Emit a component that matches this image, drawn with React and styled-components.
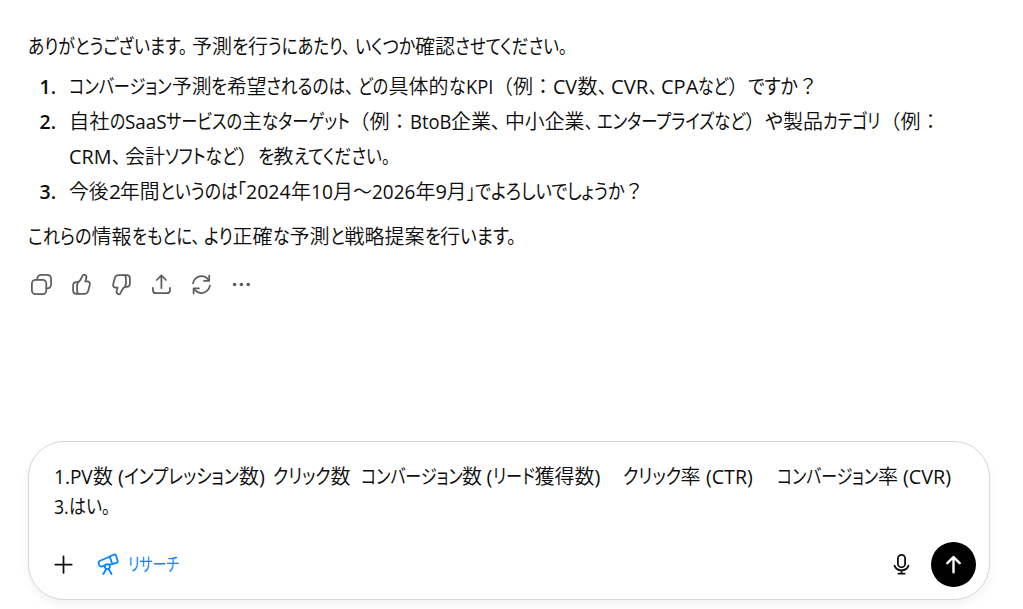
import React, { useLayoutEffect, useRef } from 'react'
import styled, { createGlobalStyle } from 'styled-components'

const GlobalStyle = createGlobalStyle`
  body {
    margin: 0;
    background: #fff;
    color: #0d0d0d;
    overflow: hidden;
    font-family: "Open Sans", "Noto Sans CJK JP", sans-serif;
  }
`

// each piece is [text, advance in px]
const INTRO = [
  ['ありがとうございます。', 164], ['予測', 40], ['を', 16], ['行', 20],
  ['うにあたり、', 86.5], ['いくつか', 60.5], ['確認', 40], ['させてください。', 117],
]

const QUESTIONS = [
  [[
    ['コンバージョン', 102.5], ['予測', 39.5], ['を', 15.5], ['希望', 39.5], ['されるのは、', 92],
    ['どの', 30.5], ['具体的', 60], ['な', 17], ['KPI', 27.5], ['（', 20], ['例', 20], ['：', 20],
    ['CV', 24.5], ['数', 20], ['、', 13.5], ['CVR', 37.5], ['、', 12.5], ['CPA', 37],
    ['など', 30], ['）', 20], ['ですか', 50], ['？', 20],
  ]],
  [
    [
      ['自社', 40.5], ['の', 15], ['SaaS', 41.5], ['サービスの', 76], ['主', 20], ['なターゲット', 87.5],
      ['（', 20], ['例', 20], ['：', 20], ['BtoB', 41.5], ['企業', 40], ['、', 14], ['中小企業', 79.5],
      ['、', 12.5], ['エンタープライズなど', 148], ['）', 20], ['や', 18], ['製品', 40],
      ['カテゴリ', 57.5], ['（', 20], ['例', 20], ['：', 20],
    ],
    [
      ['CRM', 42.5], ['、', 13.5], ['会計', 40], ['ソフトなど', 72.5], ['）', 20], ['を', 16],
      ['教', 20], ['えてください。', 101],
    ],
  ],
  [[
    ['今後', 39.5], ['2', 11.5], ['年間', 39.5], ['というのは', 77.5], ['「', 9], ['2024', 45], ['年', 20],
    ['10', 22], ['月', 20], ['～', 19], ['2026', 43.5], ['年', 20], ['9', 11], ['月', 20], ['」', 8],
    ['でよろしいでしょうか', 149.5], ['？', 20],
  ]],
]

const OUTRO = [
  ['これらの', 63.5], ['情報', 40], ['をもとに、', 72], ['より', 29], ['正確', 40], ['な', 17],
  ['予測', 40], ['と', 15], ['戦略提案', 80], ['を', 15.5], ['行', 20], ['います。', 60],
]

const DRAFT = [
  [
    ['1.PV', 39], ['数', 20], [' ', 5], ['(', 6], ['インプレッション', 115], ['数', 20], [')', 6],
    ['  ', 8], ['クリック', 57.5], ['数', 20], ['  ', 10], ['コンバージョン', 101.5], ['数', 20], [' ', 4.5],
    ['(', 6], ['リード', 42], ['獲得数', 60], [')', 6], ['    ', 22], ['クリック', 58], ['率', 20],
    [' ', 5], ['(CTR)', 47], ['    ', 24.5], ['コンバージョン', 101], ['率', 20], [' ', 5], ['(CVR)', 48.5],
  ],
  [['3.', 15], ['はい。', 46]],
]

const KANA = /[\u3001\u3002\u300c\u300d\u3041-\u30ff]/
const LATIN = /^[\x20-\x7e]+$/
const PAUSE = /[\u3001\u3002]$/
// blank space kept after 、 and 。
const PAUSE_GAP = 4.5

function Piece({ text, width }) {
  const ref = useRef(null)

  useLayoutEffect(() => {
    const el = ref.current
    const natural = el.offsetWidth
    const target = PAUSE.test(text) ? width - PAUSE_GAP : width
    if (natural) el.style.transform = `scaleX(${target / natural})`
  }, [text, width])

  return (
    <Slot style={{ width }}>
      <Glyphs ref={ref} $kana={KANA.test(text)} $latin={LATIN.test(text)}>{text}</Glyphs>
    </Slot>
  )
}

function Line({ pieces }) {
  return (
    <TextLine>
      {pieces.map(([text, width], i) => <Piece key={i} text={text} width={width} />)}
    </TextLine>
  )
}

function Icon({ children, width = 1.75, flip }) {
  return (
    <IconSvg viewBox="0 0 25 25" $flip={flip} strokeWidth={width}>
      {children}
    </IconSvg>
  )
}

function ThumbPath() {
  return (
    <>
      <path d="M8.6 10.2c1.6-.4 2.8-1.8 3.6-3.6l1.3-2.8c.4-1 1.2-1.3 2.1-1 1.6.6 2.2 1.9 1.7 3.4l-1 3.2h1.9c2 0 3.1 1.5 2.6 3.4l-1.6 6.1c-.5 2-1.8 3-3.8 3H7.4c-2.2 0-3.3-1.2-3.3-3.3v-5c0-2.3 1.3-3.4 3.3-3.4z" />
      <path d="M9.2 10.2c-.8 1-1.1 2.1-1.1 3.4v4.8c0 1.4.3 2.4 1.1 3.4" />
    </>
  )
}

function App() {
  return (
    <Page>
      <GlobalStyle />
      <Message>
        <Line pieces={INTRO} />
        <Questions>
          {QUESTIONS.map((lines, i) => (
            <Question key={i}>
              <Marker>{i + 1}.</Marker>
              <div>
                {lines.map((pieces, j) => <Line key={j} pieces={pieces} />)}
              </div>
            </Question>
          ))}
        </Questions>
        <Line pieces={OUTRO} />
      </Message>

      <Actions>
        <ActionButton aria-label="コピーする">
          <Icon>
            <rect x="2.9" y="7.9" width="14.4" height="14.3" rx="3.6" />
            <path d="M8.3 7.6v-.9a3.9 3.9 0 0 1 3.9-3.9h6a3.9 3.9 0 0 1 3.9 3.9v5.8a3.9 3.9 0 0 1-3.9 3.9h-.8" />
          </Icon>
        </ActionButton>
        <ActionButton aria-label="良い回答です">
          <Icon><ThumbPath /></Icon>
        </ActionButton>
        <ActionButton aria-label="良くない回答です">
          <Icon flip><ThumbPath /></Icon>
        </ActionButton>
        <ActionButton aria-label="共有する">
          <Icon>
            <path d="M12.4 16V3.6M7.8 8l4.6-4.6L17 8" />
            <path d="M3.9 15.8v2.1c0 2.2 1 3.3 3.2 3.3h10.7c2.2 0 3.2-1.1 3.2-3.3v-2.1" />
          </Icon>
        </ActionButton>
        <ActionButton aria-label="再試行する">
          <Icon>
            <path d="M4 11.4C4.7 7.2 8.2 4.1 12.4 4.1c3.1 0 5.7 1.5 7.3 4.2" />
            <path d="M20.2 3.6v5.2h-5.3" />
            <path d="M20.9 13.6c-.7 4.2-4.2 7.4-8.5 7.4-3.1 0-5.7-1.6-7.3-4.2" />
            <path d="M4.6 21.6v-5.2h5.3" />
          </Icon>
        </ActionButton>
        <ActionButton aria-label="その他">
          <Icon>
            <g fill="currentColor" stroke="none">
              <circle cx="5.6" cy="12.5" r="1.8" />
              <circle cx="12.4" cy="12.5" r="1.8" />
              <circle cx="19.2" cy="12.5" r="1.8" />
            </g>
          </Icon>
        </ActionButton>
      </Actions>

      <Composer>
        <Draft>
          {DRAFT.map((pieces, i) => <Line key={i} pieces={pieces} />)}
        </Draft>
        <Toolbar>
          <ToolButton aria-label="追加">
            <Icon width={1.75}><path d="M12.5 4.4v16.4M4.3 12.6h16.4" /></Icon>
          </ToolButton>
          <ResearchButton>
            <Icon>
              <path d="M13.6 4.7 4.1 8.8c-1.3.6-1.8 1.6-1.4 2.8l.5 1.4c.4 1.3 1.5 1.8 2.8 1.4l3-.8M14 12.6l2.8-.6" />
              <path d="m15 3.8 3.1-1.2c.9-.3 1.6 0 1.9.9l1.7 5.4c.3.9-.1 1.6-1 1.9l-3.1.8c-.8.2-1.4-.1-1.7-.9l-1.8-5.1c-.3-.9 0-1.5.9-1.8z" />
              <circle cx="11.4" cy="14.6" r="2.5" />
              <path d="m10.3 17-3 5M12.6 17l3 5" />
            </Icon>
            <Piece text="リサーチ" width={51} />
          </ResearchButton>
          <Spacer />
          <ToolButton aria-label="音声入力">
            <Icon>
              <rect x="8.9" y="2.9" width="7.2" height="12.4" rx="3.6" />
              <path d="M5.5 13.6c1 2.8 3.6 4.7 7 4.7s6-1.9 7-4.7M12.5 18.4v3.2M9.4 21.7h6.2" />
            </Icon>
          </ToolButton>
          <SendButton aria-label="送信">
            <Icon width={2.4}><path d="M12.5 20.2V5.2M6.3 11.2l6.2-6.2 6.2 6.2" /></Icon>
          </SendButton>
        </Toolbar>
      </Composer>
    </Page>
  )
}

const Page = styled.main`
  display: flex;
  flex-direction: column;
  height: 609px;
  box-sizing: border-box;
  padding: 29px 33px 9px 28px;
`

const Message = styled.article`
  font-size: 20px;
  line-height: 35px;
`

const TextLine = styled.div`
  display: flex;
  white-space: pre;
`

const Slot = styled.span`
  display: block;
  flex: none;
`

const Glyphs = styled.span`
  display: inline-block;
  transform-origin: 0 50%;
  white-space: pre;
  font-weight: ${({ $kana, $latin }) => ($kana || $latin ? 400 : 350)};
  font-feature-settings: ${({ $kana }) => ($kana ? '"palt"' : 'normal')};
`

const Questions = styled.ol`
  list-style: none;
  margin: 5px 0 10px;
  padding: 0;
`

const Question = styled.li`
  display: grid;
  grid-template-columns: 28px 1fr;
  column-gap: 13px;
`

const Marker = styled.span`
  font-size: 19.5px;
  font-weight: 600;
  text-align: right;
`

const Actions = styled.div`
  display: flex;
  gap: 15px;
  margin: 18px 0 144px;
  padding-left: 1px;
`

const ActionButton = styled.button`
  display: flex;
  padding: 0;
  border: 0;
  background: none;
  color: #5d5d5d;
`

const IconSvg = styled.svg`
  display: block;
  flex: none;
  width: 25px;
  height: 25px;
  fill: none;
  stroke: currentColor;
  stroke-linecap: round;
  stroke-linejoin: round;
  transform: ${({ $flip }) => ($flip ? 'rotate(180deg)' : 'none')};
`

const Composer = styled.form`
  display: flex;
  flex-direction: column;
  box-sizing: border-box;
  height: 159px;
  padding: 20px 13px 12px 25px;
  border: 1px solid #d6d6d6;
  border-radius: 36px;
  background: #fff;
  box-shadow: 0 5px 10px rgba(0, 0, 0, 0.05);
`

const Draft = styled.div`
  flex: 1;
  font-size: 20px;
  line-height: 30px;
`

const Toolbar = styled.div`
  display: flex;
  align-items: center;
  height: 45px;
`

const ToolButton = styled.span`
  display: flex;
  width: 25px;
  margin-left: -3px;
  color: #0d0d0d;
`

const ResearchButton = styled.span`
  display: flex;
  align-items: center;
  gap: 7px;
  margin-left: 20px;
  color: #0285ff;
  font-size: 18px;
  line-height: 24px;

  ${Slot} {
    padding-bottom: 2px;
  }
`

const Spacer = styled.span`
  flex: 1;
`

const SendButton = styled.span`
  display: flex;
  align-items: center;
  justify-content: center;
  width: 45px;
  height: 45px;
  margin-left: 17px;
  border-radius: 50%;
  background: #000;
  color: #fff;
`

export default App
